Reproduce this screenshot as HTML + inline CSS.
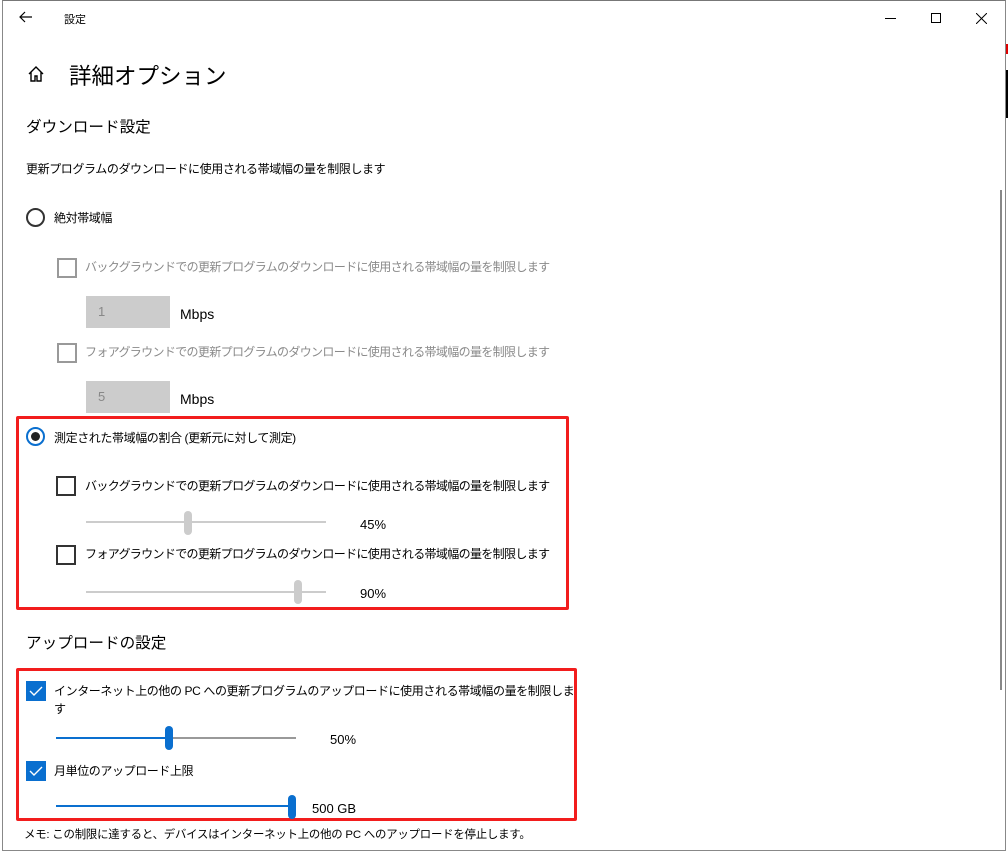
<!DOCTYPE html>
<html><head><meta charset="utf-8"><style>
*{margin:0;padding:0;box-sizing:border-box}
body{width:1008px;height:853px;background:#fff;position:relative;overflow:hidden;font-family:"Liberation Sans","Noto Sans CJK JP",sans-serif;color:#000}
.a{position:absolute;white-space:nowrap}
.t{font-size:12px;letter-spacing:-0.4px}
.s{letter-spacing:-0.65px}
.n{font-size:13px;letter-spacing:0}
.g{color:#8a8a8a}
.cb{position:absolute;width:20px;height:20px;border:2px solid #333}
.cbg{position:absolute;width:20px;height:20px;border:2px solid #999}
.cbc{position:absolute;width:20px;height:20px;background:#0a6fcf}
.box{position:absolute;background:#ccc;width:84px;height:32px;color:#888;font-size:13px;padding:8px 0 0 12px}
.tr{position:absolute;height:2px;background:#ccc}
.th{position:absolute;width:8px;height:24px;border-radius:4px;background:#ccc}
.red{position:absolute;border:3px solid #f21d1d;border-radius:2px}
</style></head><body>
<div class="a" style="left:2px;top:0;width:1004px;height:851px;border:1px solid #888;border-top-color:#777"></div>
<div class="a" style="left:1006px;top:44px;width:2px;height:10px;background:#d00"></div>
<div class="a" style="left:1006px;top:70px;width:2px;height:48px;background:#000"></div>
<svg class="a" style="left:19px;top:11px" width="14" height="12" viewBox="0 0 14 12"><path d="M13 6H1M6 1L1 6l5 5" fill="none" stroke="#000" stroke-width="1.2"/></svg>
<div class="a" style="left:64px;top:11px;font-size:11px">設定</div>
<div class="a" style="left:885px;top:18px;width:11px;height:1px;background:#000"></div>
<div class="a" style="left:931px;top:13px;width:10px;height:10px;border:1px solid #000"></div>
<svg class="a" style="left:976px;top:13px" width="11" height="11"><path d="M0 0L11 11M11 0L0 11" stroke="#000" stroke-width="1"/></svg>
<svg class="a" style="left:27px;top:65px" width="18" height="18" viewBox="0 0 18 18"><path d="M2 9L9 2l7 7M4 7v9h4v-5h2v5h4V7" fill="none" stroke="#000" stroke-width="1.4"/></svg>
<div class="a" style="left:69px;top:59px;font-size:22.5px">詳細オプション</div>
<div class="a" style="left:26px;top:115px;font-size:15.6px">ダウンロード設定</div>
<div class="a t" style="left:26px;top:160px">更新プログラムのダウンロードに使用される帯域幅の量を制限します</div>
<div class="a" style="left:26px;top:208px;width:19px;height:19px;border:2px solid #333;border-radius:50%"></div>
<div class="a t" style="left:54px;top:209px">絶対帯域幅</div>
<div class="cbg" style="left:57px;top:258px"></div>
<div class="a t s g" style="left:85px;top:258px">バックグラウンドでの更新プログラムのダウンロードに使用される帯域幅の量を制限します</div>
<div class="box" style="left:86px;top:296px">1</div>
<div class="a" style="left:180px;top:306px;font-size:14px">Mbps</div>
<div class="cbg" style="left:57px;top:343px"></div>
<div class="a t s g" style="left:85px;top:343px">フォアグラウンドでの更新プログラムのダウンロードに使用される帯域幅の量を制限します</div>
<div class="box" style="left:86px;top:381px">5</div>
<div class="a" style="left:180px;top:391px;font-size:14px">Mbps</div>
<div class="red" style="left:16px;top:416px;width:553px;height:194px"></div>
<div class="a" style="left:26px;top:427px;width:19px;height:19px;border:2px solid #0a6fcf;border-radius:50%"></div>
<div class="a" style="left:31px;top:432px;width:9px;height:9px;background:#222;border-radius:50%"></div>
<div class="a t" style="left:54px;top:429px">測定された帯域幅の割合 (更新元に対して測定)</div>
<div class="cb" style="left:56px;top:476px"></div>
<div class="a t s" style="left:85px;top:477px">バックグラウンドでの更新プログラムのダウンロードに使用される帯域幅の量を制限します</div>
<div class="tr" style="left:86px;top:521px;width:240px"></div>
<div class="th" style="left:184px;top:511px"></div>
<div class="a t n" style="left:360px;top:517px">45%</div>
<div class="cb" style="left:56px;top:545px"></div>
<div class="a t s" style="left:85px;top:545px">フォアグラウンドでの更新プログラムのダウンロードに使用される帯域幅の量を制限します</div>
<div class="tr" style="left:86px;top:591px;width:240px"></div>
<div class="th" style="left:294px;top:580px"></div>
<div class="a t n" style="left:360px;top:586px">90%</div>
<div class="a" style="left:26px;top:631px;font-size:15.6px">アップロードの設定</div>
<div class="red" style="left:16px;top:668px;width:561px;height:153px"></div>
<div class="cbc" style="left:26px;top:681px"></div>
<svg class="a" style="left:26px;top:681px" width="20" height="20"><path d="M4 10l4 4 8-8" fill="none" stroke="#fff" stroke-width="1.4"/></svg>
<div class="a t" style="left:54px;top:682px">インターネット上の他の PC への更新プログラムのアップロードに使用される帯域幅の量を制限しま</div>
<div class="a t" style="left:54px;top:700px">す</div>
<div class="a" style="left:56px;top:737px;width:114px;height:2px;background:#0a6fcf"></div>
<div class="a" style="left:170px;top:737px;width:126px;height:2px;background:#999"></div>
<div class="a" style="left:165px;top:726px;width:8px;height:24px;border-radius:4px;background:#0a6fcf"></div>
<div class="a t n" style="left:330px;top:732px">50%</div>
<div class="cbc" style="left:26px;top:761px"></div>
<svg class="a" style="left:26px;top:761px" width="20" height="20"><path d="M4 10l4 4 8-8" fill="none" stroke="#fff" stroke-width="1.4"/></svg>
<div class="a t" style="left:54px;top:762px">月単位のアップロード上限</div>
<div class="a" style="left:56px;top:805px;width:236px;height:2px;background:#0a6fcf"></div>
<div class="a" style="left:288px;top:795px;width:8px;height:24px;border-radius:4px;background:#0a6fcf"></div>
<div class="a t n" style="left:312px;top:801px">500 GB</div>
<div class="a" style="left:24px;top:826px;font-size:11.4px;letter-spacing:-0.2px">メモ: この制限に達すると、デバイスはインターネット上の他の PC へのアップロードを停止します。</div>
<div class="a" style="left:1000px;top:190px;width:2px;height:500px;background:#888"></div>
</body></html>
